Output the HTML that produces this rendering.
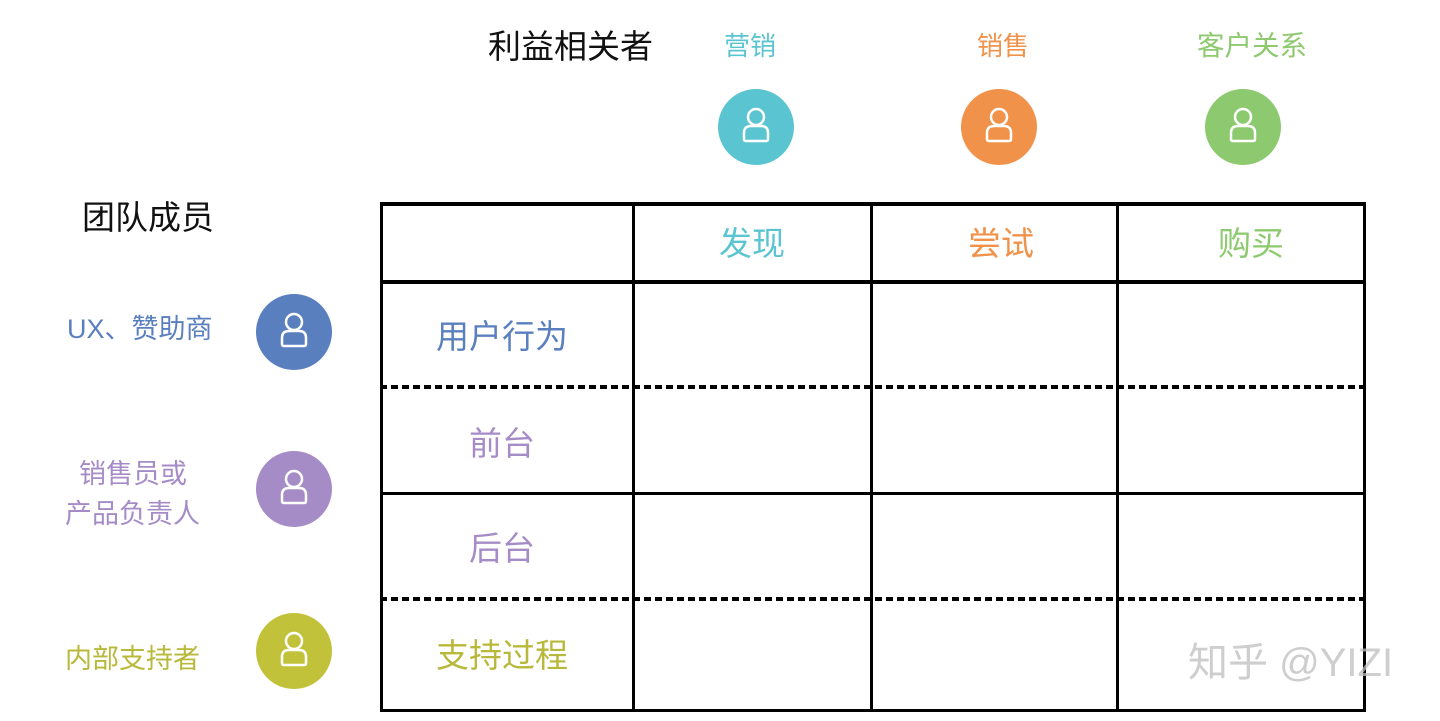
<!DOCTYPE html>
<html><head><meta charset="utf-8"><style>
body{margin:0;width:1440px;height:721px;background:#fff;position:relative;overflow:hidden;font-family:"Liberation Sans","Noto Sans CJK SC",sans-serif}
.t{position:absolute;white-space:nowrap;line-height:1}
.c{position:absolute;width:76px;height:76px;border-radius:50%}
.c svg{position:absolute;left:0;top:0}
.h{position:absolute;background:#000;height:3px}
.v{position:absolute;background:#000;width:3px}
.d{position:absolute;height:4px;background:repeating-linear-gradient(90deg,#000 0 7px,transparent 7px 11px)}
</style></head><body>
<div class="t" style="left:488px;top:30px;font-size:33px;color:#111">利益相关者</div>
<div class="t" style="left:724px;top:33px;font-size:26px;color:#5bc4d1">营销</div>
<div class="t" style="left:977px;top:33px;font-size:26px;color:#f0924a">销售</div>
<div class="t" style="left:1197px;top:32px;font-size:27.5px;color:#8dc96e">客户关系</div>
<div class="t" style="left:82px;top:201px;font-size:33px;color:#111">团队成员</div>
<div class="t" style="left:67px;top:316px;font-size:27px;color:#5a7fbf">UX、赞助商</div>
<div class="t" style="left:79px;top:461px;font-size:27px;color:#a58cc7">销售员或</div>
<div class="t" style="left:65px;top:501px;font-size:27px;color:#a58cc7">产品负责人</div>
<div class="t" style="left:65px;top:646px;font-size:27px;color:#b8b83a">内部支持者</div>

<div class="c" style="left:718px;top:89px;background:#5bc4d1"><svg width="76" height="76"><circle cx="38" cy="28" r="8" fill="none" stroke="#fff" stroke-width="2.5"/><path d="M26 50 V44 Q26 37 33 37 H43 Q50 37 50 44 V50 Q50 52 48 52 H28 Q26 52 26 50Z" fill="none" stroke="#fff" stroke-width="2.5"/></svg></div>
<div class="c" style="left:961px;top:89px;background:#f0924a"><svg width="76" height="76"><circle cx="38" cy="28" r="8" fill="none" stroke="#fff" stroke-width="2.5"/><path d="M26 50 V44 Q26 37 33 37 H43 Q50 37 50 44 V50 Q50 52 48 52 H28 Q26 52 26 50Z" fill="none" stroke="#fff" stroke-width="2.5"/></svg></div>
<div class="c" style="left:1205px;top:89px;background:#8dc96e"><svg width="76" height="76"><circle cx="38" cy="28" r="8" fill="none" stroke="#fff" stroke-width="2.5"/><path d="M26 50 V44 Q26 37 33 37 H43 Q50 37 50 44 V50 Q50 52 48 52 H28 Q26 52 26 50Z" fill="none" stroke="#fff" stroke-width="2.5"/></svg></div>
<div class="c" style="left:256px;top:294px;background:#5a7fbf"><svg width="76" height="76"><circle cx="38" cy="28" r="8" fill="none" stroke="#fff" stroke-width="2.5"/><path d="M26 50 V44 Q26 37 33 37 H43 Q50 37 50 44 V50 Q50 52 48 52 H28 Q26 52 26 50Z" fill="none" stroke="#fff" stroke-width="2.5"/></svg></div>
<div class="c" style="left:256px;top:451px;background:#a58cc7"><svg width="76" height="76"><circle cx="38" cy="28" r="8" fill="none" stroke="#fff" stroke-width="2.5"/><path d="M26 50 V44 Q26 37 33 37 H43 Q50 37 50 44 V50 Q50 52 48 52 H28 Q26 52 26 50Z" fill="none" stroke="#fff" stroke-width="2.5"/></svg></div>
<div class="c" style="left:256px;top:613px;background:#c2c23a"><svg width="76" height="76"><circle cx="38" cy="28" r="8" fill="none" stroke="#fff" stroke-width="2.5"/><path d="M26 50 V44 Q26 37 33 37 H43 Q50 37 50 44 V50 Q50 52 48 52 H28 Q26 52 26 50Z" fill="none" stroke="#fff" stroke-width="2.5"/></svg></div>

<div class="h" style="left:380px;top:202px;width:986px;height:4px"></div>
<div class="h" style="left:380px;top:280px;width:986px;height:4px"></div>
<div class="h" style="left:380px;top:492px;width:986px"></div>
<div class="h" style="left:380px;top:709px;width:986px"></div>
<div class="d" style="left:380px;top:385px;width:986px"></div>
<div class="d" style="left:380px;top:597px;width:986px"></div>
<div class="v" style="left:380px;top:202px;height:510px"></div>
<div class="v" style="left:632px;top:202px;height:510px"></div>
<div class="v" style="left:870px;top:202px;height:510px"></div>
<div class="v" style="left:1116px;top:202px;height:510px"></div>
<div class="v" style="left:1363px;top:202px;height:510px"></div>

<div class="t" style="left:719px;top:227px;font-size:33px;color:#5bc4d1">发现</div>
<div class="t" style="left:968px;top:227px;font-size:33px;color:#f0924a">尝试</div>
<div class="t" style="left:1218px;top:227px;font-size:33px;color:#8dc96e">购买</div>
<div class="t" style="left:436px;top:320px;font-size:33px;color:#5a7fbf">用户行为</div>
<div class="t" style="left:469px;top:427px;font-size:33px;color:#a58cc7">前台</div>
<div class="t" style="left:469px;top:532px;font-size:33px;color:#a58cc7">后台</div>
<div class="t" style="left:436px;top:639px;font-size:33px;color:#b8b83a">支持过程</div>
<div class="t" style="left:1188px;top:643px;font-size:40px;color:rgba(190,190,190,0.75)">知乎 @YIZI</div>
</body></html>
